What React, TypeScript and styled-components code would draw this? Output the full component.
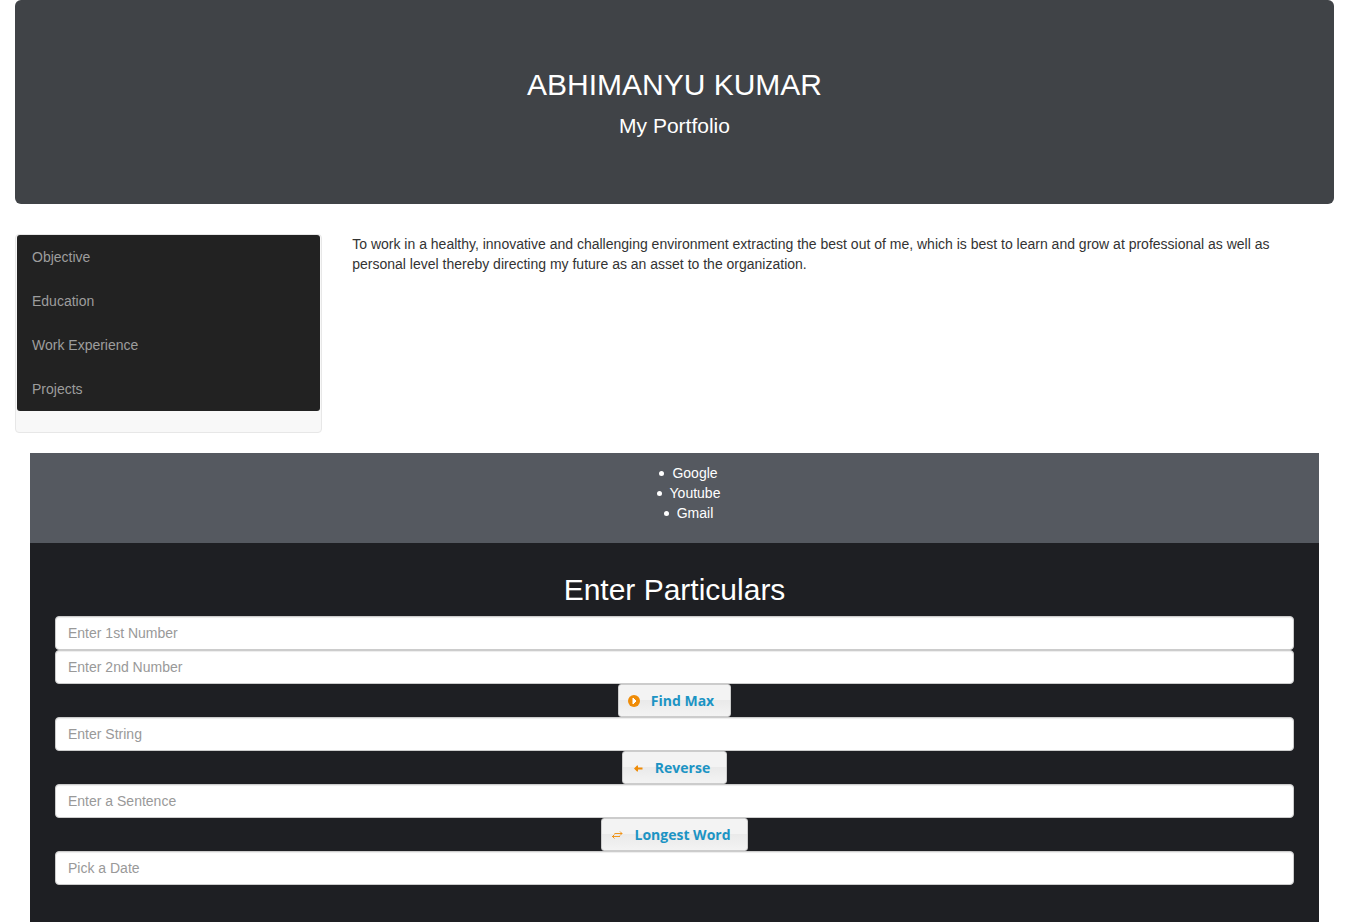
import React from 'react';
import styled, { createGlobalStyle } from 'styled-components';

const GlobalStyle = createGlobalStyle`
  *, *::before, *::after { box-sizing: border-box; }
  body {
    margin: 0;
    background: #fff;
    color: #333;
    font: 14px/20px "Liberation Sans", Arial, sans-serif;
  }
`;

const Page = styled.div`
  display: flex;
  flex-direction: column;
  min-height: 100vh;
`;

const Hero = styled.header`
  margin: 0 15px 30px;
  padding: 68px 60px 63px;
  border-radius: 6px;
  background: #404347;
  color: #fff;
  text-align: center;
`;

const Heading = styled.h2`
  margin: 0 0 10px;
  font-size: 30px;
  font-weight: 400;
  line-height: 33px;
`;

const Tagline = styled.p`
  margin: 0;
  font-size: 21px;
  line-height: 30px;
`;

const Columns = styled.div`
  display: flex;
`;

const Column = styled.div<{ $share: number }>`
  width: ${({ $share }) => $share}%;
  padding: 0 15px;
`;

const Sidebar = styled.nav`
  margin-bottom: 20px;
  padding: 0 1px 21px;
  border: 1px solid #e7e7e7;
  border-radius: 4px;
  background: #f8f8f8;
`;

const Menu = styled.ul`
  margin: 0;
  padding: 0;
  list-style: none;
  border-radius: 3px;
  background: #222;
`;

const MenuLink = styled.a`
  display: block;
  padding: 12px 15px;
  color: #9d9d9d;
  text-decoration: none;
`;

const Text = styled.p`
  margin: 0 0 10px;
  padding-right: 15px;
`;

const LinkBand = styled.section`
  margin: 0 30px;
  padding: 10px 0 20px;
  background: #555960;
  color: #fff;
`;

const Links = styled.ul`
  display: flex;
  flex-direction: column;
  align-items: center;
  margin: 0;
  padding: 0 0 0 28px;
  list-style: none;
`;

const LinkItem = styled.li`
  display: flex;
  align-items: center;
  gap: 8px;
  &::before {
    content: "";
    width: 5px;
    height: 5px;
    border-radius: 50%;
    background: #fff;
  }
`;

const SiteLink = styled.a`
  color: #fff;
  text-decoration: none;
`;

const Panel = styled.form`
  display: flex;
  flex: 1;
  flex-direction: column;
  align-items: center;
  margin: 0 30px;
  padding: 30px 25px 36px;
  background: #1e1f23;
  color: #fff;
`;

const Field = styled.input`
  width: 100%;
  height: 34px;
  padding: 6px 12px;
  border: 1px solid #ccc;
  border-radius: 4px;
  background: #fff;
  box-shadow: inset 0 1px 1px rgba(0, 0, 0, 0.075);
  color: #555;
  font: inherit;
  &::placeholder { color: #999; opacity: 1; }
`;

const Action = styled.button`
  display: flex;
  align-items: center;
  gap: 9px;
  height: 33px;
  padding: 0 16px 0 7px;
  border: 1px solid #ccc;
  border-radius: 3px;
  background: linear-gradient(#f3f3f3 50%, #eaeaea 50%, #f3f3f3);
  color: #1c94c4;
  font: 700 14px/21px "Trebuchet MS", "Open Sans", sans-serif;
  cursor: pointer;
`;

const Icon = styled.svg`
  width: 16px;
  height: 16px;
  color: #ef8c08;
`;

const PlayIcon = () => (
  <Icon viewBox="0 0 16 16" aria-hidden="true">
    <circle cx="8" cy="8" r="6" fill="currentColor" />
    <path d="M6.500 5h1.500v1h1v1h1v2H9v1H8v1H6.500z" fill="#fff" />
  </Icon>
);

const BackIcon = () => (
  <Icon viewBox="0 0 16 16" aria-hidden="true">
    <path d="M4 8.500l3-3h1v2h4.500v2H8v2H7z" fill="currentColor" />
  </Icon>
);

const SwapIcon = () => (
  <Icon viewBox="0 0 16 16" aria-hidden="true">
    <path
      d="M3 9.500h8M5.500 7.500l-2 2 2 2M5.500 6.500H13M11 4.500l2 2-2 2"
      fill="none"
      stroke="currentColor"
      strokeWidth="0.900"
    />
  </Icon>
);

const sections = ['Objective', 'Education', 'Work Experience', 'Projects'];
const sites = ['Google', 'Youtube', 'Gmail'];

export default function App() {
  return (
    <Page>
      <GlobalStyle />
      <Hero>
        <Heading>ABHIMANYU KUMAR</Heading>
        <Tagline>My Portfolio</Tagline>
      </Hero>
      <Columns>
        <Column $share={25}>
          <Sidebar>
            <Menu>
              {sections.map((name) => (
                <li key={name}><MenuLink href="#">{name}</MenuLink></li>
              ))}
            </Menu>
          </Sidebar>
        </Column>
        <Column $share={75}>
          <Text>
            To work in a healthy, innovative and challenging environment extracting the best out of me, which is best to
            learn and grow at professional as well as personal level thereby directing my future as an asset to the
            organization.
          </Text>
        </Column>
      </Columns>
      <LinkBand>
        <Links>
          {sites.map((name) => (
            <LinkItem key={name}><SiteLink href="#">{name}</SiteLink></LinkItem>
          ))}
        </Links>
      </LinkBand>
      <Panel>
        <Heading>Enter Particulars</Heading>
        <Field aria-label="Enter 1st Number" placeholder="Enter 1st Number" />
        <Field aria-label="Enter 2nd Number" placeholder="Enter 2nd Number" />
        <Action type="button"><PlayIcon />Find Max</Action>
        <Field aria-label="Enter String" placeholder="Enter String" />
        <Action type="button"><BackIcon />Reverse</Action>
        <Field aria-label="Enter a Sentence" placeholder="Enter a Sentence" />
        <Action type="button"><SwapIcon />Longest Word</Action>
        <Field aria-label="Pick a Date" placeholder="Pick a Date" />
      </Panel>
    </Page>
  );
}
